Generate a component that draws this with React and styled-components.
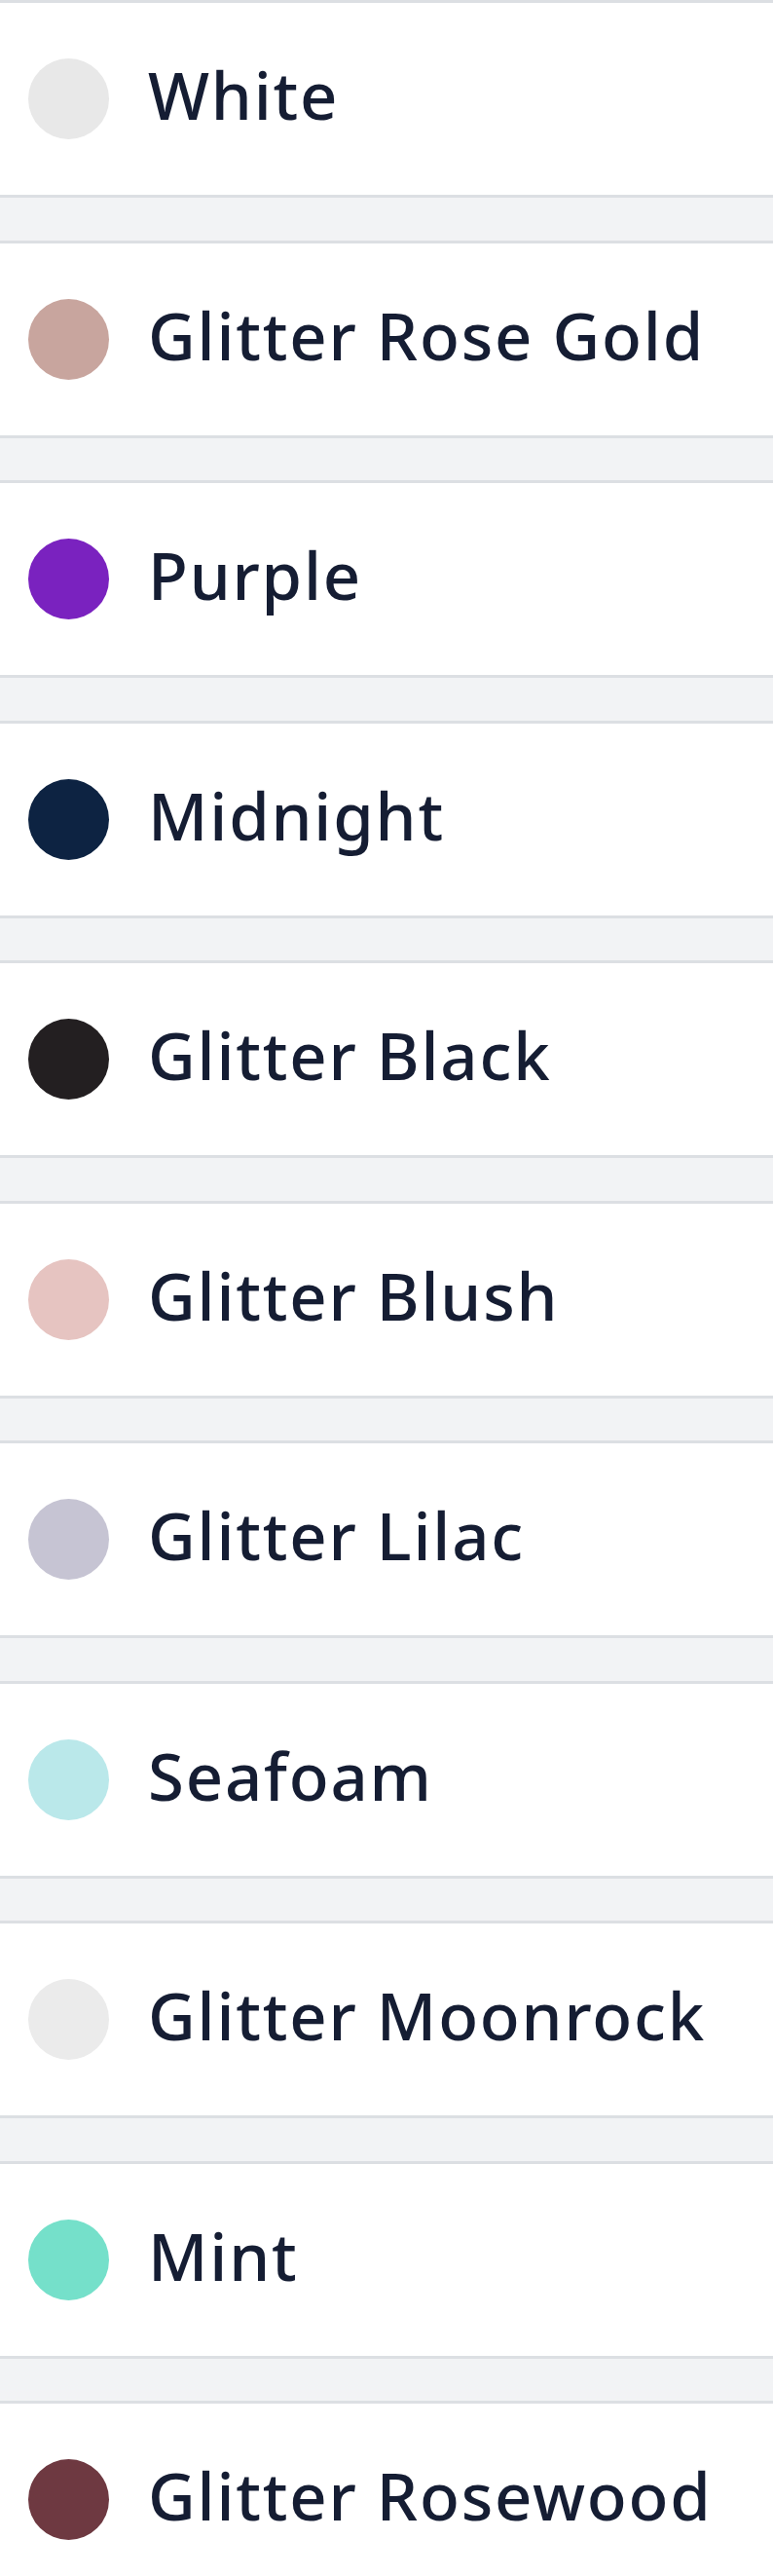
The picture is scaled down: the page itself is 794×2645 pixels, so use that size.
import React from 'react';
import styled, { createGlobalStyle } from 'styled-components';

const GlobalStyle = createGlobalStyle`
  html, body {
    margin: 0;
    padding: 0;
    background: #f2f3f5;
  }
`;

const List = styled.div`
  display: flex;
  flex-direction: column;
  gap: 43.5px;
  width: 100%;
`;

const Row = styled.div`
  display: flex;
  align-items: center;
  gap: 40px;
  box-sizing: border-box;
  height: 203px;
  padding-left: 29px;
  background: #ffffff;
  border-top: 3px solid #dcdfe3;
  border-bottom: 3px solid #dcdfe3;
`;

const Swatch = styled.span`
  flex: none;
  width: 83px;
  height: 83px;
  border-radius: 50%;
  background: ${(p) => p.$color};
`;

const Name = styled.span`
  font-family: "Noto Sans", "DejaVu Sans", sans-serif;
  font-weight: 500;
  font-size: 67px;
  line-height: 1;
  letter-spacing: 1.8px;
  padding-bottom: 8px;
  color: #151d33;
  white-space: nowrap;
`;

const colours = [
  { name: 'White', color: '#e8e8e8' },
  { name: 'Glitter Rose Gold', color: '#c8a59e' },
  { name: 'Purple', color: '#7a22bf' },
  { name: 'Midnight', color: '#0d2342' },
  { name: 'Glitter Black', color: '#231f21' },
  { name: 'Glitter Blush', color: '#e6c4c1' },
  { name: 'Glitter Lilac', color: '#c6c4d3' },
  { name: 'Seafoam', color: '#bae8ea' },
  { name: 'Glitter Moonrock', color: '#ebebeb' },
  { name: 'Mint', color: '#75e0ca' },
  { name: 'Glitter Rosewood', color: '#6e3941' },
];

const App = () => (
  <>
    <GlobalStyle />
    <List>
      {colours.map((c) => (
        <Row key={c.name}>
          <Swatch $color={c.color} />
          <Name>{c.name}</Name>
        </Row>
      ))}
    </List>
  </>
);

export default App;
